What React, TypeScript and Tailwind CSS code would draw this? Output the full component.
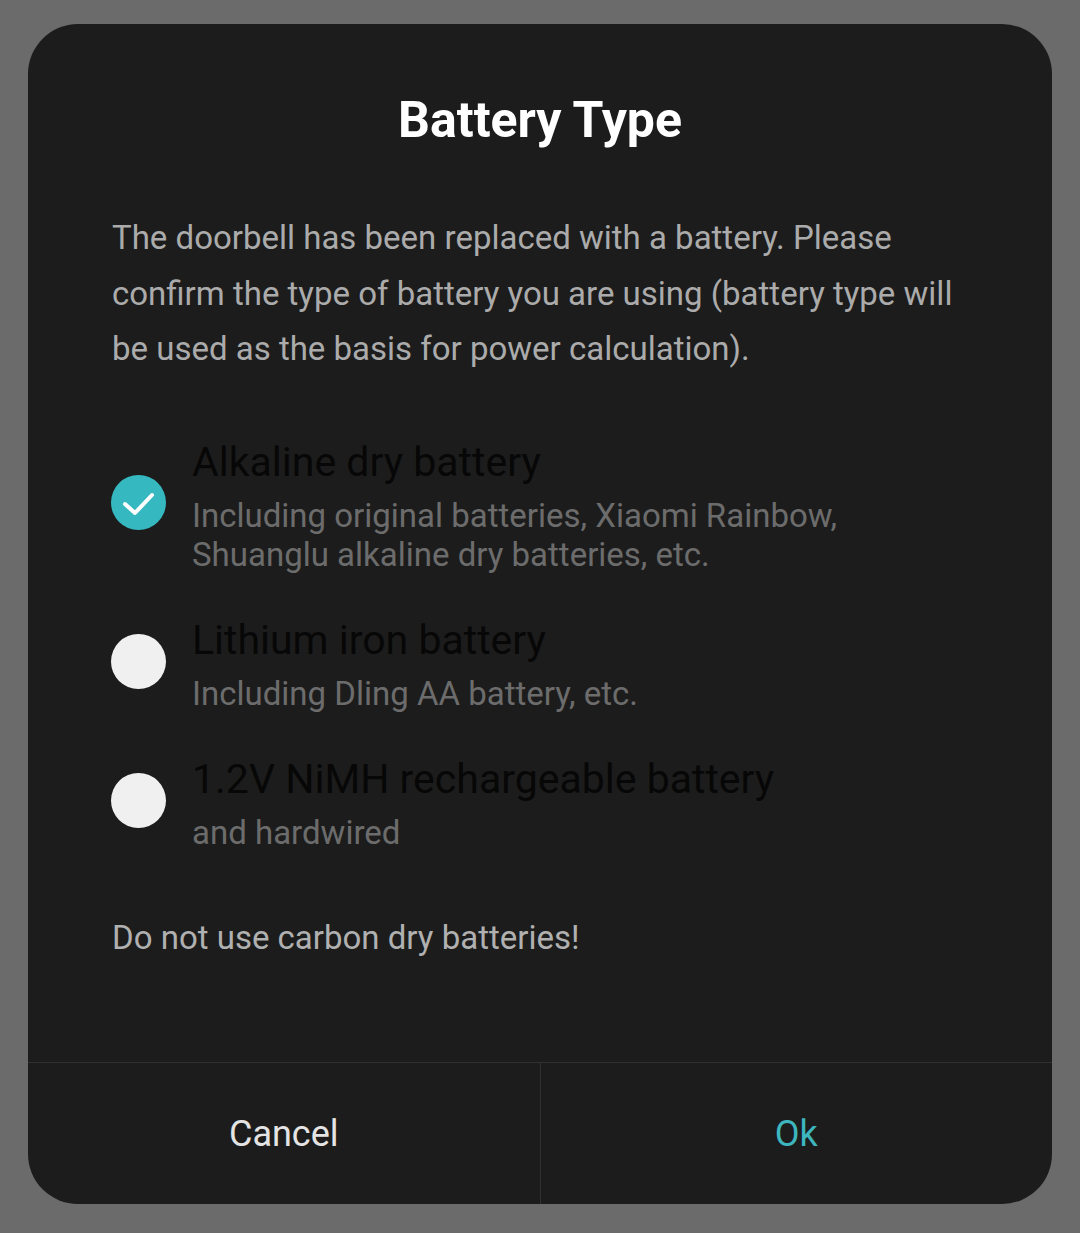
import React, { useState } from 'react';

const options = [
  {
    id: 'alkaline',
    title: 'Alkaline dry battery',
    subtitle: ['Including original batteries, Xiaomi Rainbow,', 'Shuanglu alkaline dry batteries, etc.'],
  },
  {
    id: 'lithium',
    title: 'Lithium iron battery',
    subtitle: ['Including Dling AA battery, etc.'],
  },
  {
    id: 'nimh',
    title: '1.2V NiMH rechargeable battery',
    subtitle: ['and hardwired'],
  },
];

const Radio = ({ checked }: { checked: boolean }) =>
  checked ? (
    <div className="w-[55px] h-[55px] rounded-full bg-[#36b8c0] shrink-0">
      <svg width="55" height="55" viewBox="0 0 55 55" fill="none">
        <path d="M14 29l10 9 17-18" stroke="#fff" strokeWidth="4" strokeLinecap="round" strokeLinejoin="round" />
      </svg>
    </div>
  ) : (
    <div className="w-[55px] h-[55px] rounded-full bg-[#f0f0f0] shrink-0" />
  );

export default function App() {
  const [selected, setSelected] = useState('alkaline');

  return (
    <div
      className="w-[1080px] h-[1233px] bg-[#6b6b6b] pt-[24px] px-[28px]"
      style={{ fontFamily: 'Roboto, "Noto Sans", sans-serif' }}
    >
      <div className="w-[1024px] h-[1180px] bg-[#1c1c1c] rounded-[50px] flex flex-col overflow-hidden">
        <h1 className="pt-[68px] text-center text-white font-bold text-[50px] leading-[56px]">Battery Type</h1>

        <p className="mt-[62px] px-[84px] text-[33px] leading-[55.5px] text-[#ababab]">
          The doorbell has been replaced with a battery. Please confirm the type of battery you are using (battery type will be used as the basis for power calculation).
        </p>

        <div className="mt-[60px] px-[83px] flex flex-col gap-[40.5px]">
          {options.map((o) => (
            <div
              key={o.id}
              className="flex items-center gap-[26px] cursor-pointer"
              onClick={() => setSelected(o.id)}
            >
              <div className="-mt-[5px]">
                <Radio checked={selected === o.id} />
              </div>
              <div className="flex flex-col">
                <div className="text-[41px] leading-[50px] text-[#070707]">{o.title}</div>
                <div className="mt-[9.5px] text-[33px] leading-[39px] text-[#6c6c6c]">
                  {o.subtitle.map((s) => (
                    <div key={s}>{s}</div>
                  ))}
                </div>
              </div>
            </div>
          ))}
        </div>

        <p className="mt-[65.5px] px-[84px] text-[33px] leading-[40px] text-[#b0b0b0]">Do not use carbon dry batteries!</p>

        <div className="mt-auto h-[142px] border-t border-[#303030] flex">
          <button className="flex-1 flex items-center justify-center text-[36px] text-[#e4e4e4] border-r border-[#303030]">
            Cancel
          </button>
          <button className="flex-1 flex items-center justify-center text-[36px] text-[#3db6be]">Ok</button>
        </div>
      </div>
    </div>
  );
}
